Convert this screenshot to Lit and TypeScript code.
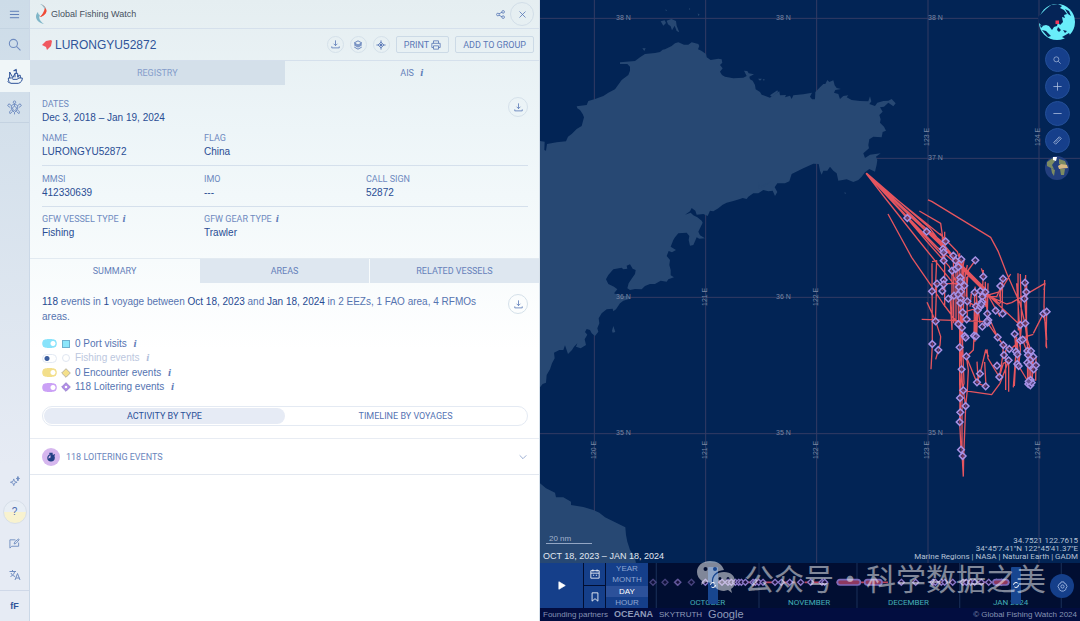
import { LitElement, html, svg, css } from "lit";
import { customElement, state } from "lit/decorators.js";
import { classMap } from "lit/directives/class-map.js";

const LAND_NORTH =
  "M0,423 L14,425 13,450 18,452 21,432 50,427 78,424 84,410 95,402 110,387 125,378 132,352 128,342 120,330 112,325 110,319 140,315 145,303 163,298 190,288 205,278 225,268 245,240 265,225 270,212 270,200 262,192 240,192 240,187 285,183 300,172 315,162 345,159 360,156 368,149 375,148 395,138 405,130 415,127 432,134 445,134 455,127 475,132 478,138 474,148 484,152 498,162 500,172 512,180 535,176 545,178 547,188 540,195 548,205 540,215 546,225 555,230 580,235 610,233 620,228 612,212 622,213 626,220 642,223 628,230 630,238 638,242 645,255 647,268 660,276 665,284 690,293 700,285 718,274 720,286 738,285 735,292 750,287 755,297 760,286 790,283 816,278 810,290 816,298 825,298 826,276 840,262 850,252 856,252 862,240 868,246 880,241 884,256 890,264 903,267 886,270 882,278 895,282 900,297 910,288 925,286 920,292 935,300 960,303 985,304 990,289 994,304 988,312 1005,318 1012,308 1030,303 1045,302 1055,297 1067,310 1060,319 1045,308 1032,320 1020,322 1028,335 1018,345 1022,358 1020,368 1032,380 1038,392 1028,396 1025,412 1000,410 988,418 985,435 987,445 970,460 975,474 990,464 1022,460 1008,470 1012,480 1010,494 1005,515 988,507 975,517 965,530 955,540 940,546 920,538 895,542 890,520 880,512 870,500 862,512 850,512 845,524 840,512 836,492 820,491 790,505 755,522 748,544 735,550 712,550 704,562 712,576 705,588 698,572 685,574 670,570 655,580 640,580 625,590 620,597 608,594 600,597 580,603 560,608 548,614 535,625 520,634 510,632 503,648 490,642 470,644 466,632 455,624 450,634 435,644 452,638 460,646 472,652 485,662 488,668 480,685 475,695 480,706 495,715 478,716 470,712 465,724 460,735 450,737 446,720 448,708 440,698 415,700 405,712 400,720 392,740 408,750 396,757 386,753 380,768 390,780 388,795 392,810 392,826 402,832 385,838 380,845 362,842 345,852 330,852 315,858 305,868 285,867 270,870 262,865 266,850 275,836 285,822 287,810 278,806 270,793 260,797 262,806 250,808 245,803 220,808 205,825 198,838 205,852 222,860 232,868 222,880 242,888 262,888 270,896 250,902 240,910 228,928 220,934 218,926 200,928 185,940 176,955 178,970 172,985 175,995 165,1008 155,1000 150,990 140,987 135,996 142,1004 134,1018 138,1035 122,1045 108,1040 112,1030 102,1040 96,1050 84,1062 75,1036 70,1050 58,1050 42,1058 44,1075 36,1090 30,1108 20,1125 18,1148 8,1152 0,1162 Z";
const LAND_SOUTH =
  "M0,1450 L18,1465 45,1478 48,1492 70,1492 93,1505 93,1515 130,1521 160,1530 178,1538 195,1552 256,1582 258,1605 262,1625 270,1650 284,1670 290,1700 0,1700 Z";
const ISLETS =
  "M362,64 l12,-3 4,8 -8,8 z M380,62 l14,-5 14,6 2,14 8,20 -8,-4 -6,-16 -8,14 -4,-12 -8,-6 z M307,145 l10,0 -4,8 z M690,286 l22,-15 2,5 -18,14 z M655,545 l4,16 34,-18 -26,20 -12,2 z M216,992 l4,-14 6,18 -8,2 z M376,28 l5,3 -3,3 z M447,24 l4,3 -3,3 z M473,40 l6,4 -4,4 z M654,236 l12,0 -6,6 z M668,238 l6,0 -2,5 z M913,577 l6,2 -4,3 z";

const TRACKS = [
  "M18,70 L100,140 180,205 250,262 292,305 300,330",
  "M18,70 L110,160 200,245 258,300 304,350 376,426 420,462",
  "M18,70 L142,200 230,290 300,352 390,440 480,525",
  "M18,70 L142,204 250,318",
  "M18,70 L120,180 210,285 268,350 295,410",
  "M18,70 L80,150 175,270 280,400",
  "M20,72 L150,195 240,270 290,330 380,420",
  "M22,74 L160,200 248,285",
  "M20,70 L130,165 210,235 252,290 M20,72 L125,172 215,252 262,310 M140,190 L250,290 320,365 376,420",
  "M84,192 L155,322 217,412 250,462 295,522",
  "M178,183 L242,220 248,262 249,300",
  "M204,150 L215,154 392,262 415,305 440,370 480,460 495,520 500,560",
  "M185,508 L280,511 380,515",
  "M201,457 L227,514 242,560 240,585 227,628",
  "M216,335 L230,332 226,420 M216,340 L217,585 213,658 M230,400 L226,520 M254,245 V470 M247,262 V335",
  "M231,401 L300,400 M313,325 L295,440 M322,345 L303,440 M346,331 L325,360 318,440 M304,328 L295,350",
  "M288,330 V520 M293,340 L296,530 M299,310 L301,560 M306,330 L304,560 M311,350 L303,500 M316,360 L308,520",
  "M276,365 V540 M281,430 V520 M270,440 L276,540 M320,380 L322,508 M334,430 L330,470",
  "M344,427 L342,560 M350,430 L347,560 M361,423 V480 M370,360 L367,440 M376,395 V470 M364,355 L372,380 M384,400 L382,491",
  "M355,440 L410,440 428,400 M428,386 L426,490 M424,408 L430,380 M421,410 V460 M390,440 L440,462 455,458 555,400 552,420",
  "M376,426 L382,491 413,562 430,585 448,597 M367,440 L420,425 452,372 M382,510 L367,530 M384,435 L420,500",
  "M474,370 L475,540 481,525 M481,372 L485,520 479,590 M497,375 L494,446 502,560 M500,400 L499,580 M470,400 L482,580",
  "M554,390 L552,470 560,595 M560,485 L558,590 M550,491 L558,530 560,570 M550,491 L520,550 M520,553 L488,563 450,600",
  "M295,522 L303,560 300,592 305,655 300,745 299,815 303,895 M299,540 V700 L301,790 M306,533 L312,700 306,720",
  "M308,540 L304,640 308,720 M306,720 V910 L310,980 M310,720 L317,770 311,920 310,978 M301,745 V815",
  "M342,560 L340,600 319,620 325,660 322,720 317,768 M319,620 L351,698 360,672 377,600 386,620 M351,635 L355,700 377,710 M374,636 L378,708 M381,598 L384,625 418,681 430,640 446,632",
  "M312,722 L395,734 420,700 446,632 V725 M413,562 L430,585 428,620 418,681 M437,600 V720",
  "M464,552 L468,605 460,712 M470,560 L466,650 463,708 M472,570 L475,650 M481,520 V600 L476,648 512,708 M488,569 L510,630",
  "M502,560 L503,700 M506,590 L508,700 M513,600 L512,705 M520,620 L516,700 M528,620 L527,692 M499,560 L512,600 521,658",
  "M251,390 L247,423 M257,274 L250,330 M240,250 L257,274 M280,317 L282,437 M430,386 L418,440 M345,410 L360,520",
  "M348,469 L345,575 M353,481 L350,560 M322,454 L348,469 M308,487 L368,470 M380,515 L413,562",
];

const EVENTS = [
  142,204,200,245,257,274,249,297,251,307,251,332,280,317,287,332,304,328,346,331,276,362,287,357,295,351,370,380,429,386,421,408,
  495,398,499,426,493,446,231,401,251,390,251,403,247,423,216,424,265,446,282,437,301,383,301,395,313,407,297,411,302,425,295,434,
  302,445,301,459,322,454,344,427,361,423,376,426,367,440,366,456,348,469,353,481,361,470,364,463,407,482,428,491,308,487,320,508,
  295,522,306,533,227,514,382,491,385,510,383,518,367,530,381,514,550,491,560,485,481,525,496,520,217,582,235,600,299,592,314,558,
  317,563,342,557,348,559,319,619,305,658,360,671,351,697,377,709,310,721,300,744,317,768,301,787,299,816,303,899,308,918,413,562,
  430,585,448,597,432,615,446,631,411,647,418,681,464,552,468,605,472,613,472,642,476,648,481,572,488,569,502,603,513,603,504,615,
  520,620,510,630,502,638,508,645,521,658,528,646,512,690,505,702,511,706,515,698,506,694,
];
const pairs = (list: number[]) => list.reduce((out: number[][], v, i) => (i % 2 ? out[out.length - 1].push(v) : out.push([v]), out), []);

const icon = (body: unknown, size = 12, box = 24) =>
  html`<svg class="icon" width=${size} height=${size} viewBox="0 0 ${box} ${box}" aria-hidden="true">${body}</svg>`;

const ICONS = {
  menu: svg`<path d="M2 5H22M2 12H22M2 19H22"/>`,
  search: svg`<circle cx="10" cy="10" r="7.5"/><path d="M15.5 15.5L23 23"/>`,
  ship: svg`<path d="M2 15h5l2 2h6l3-2h5c0 4-2 7-6 8H6c-3-1-4-4-4-8zM4 15V6l5 9M12 14V8h4v6M12 8l-3 6M14 8V2l-4 2h4M17 14V11h3v4M1 20l3 3"/>`,
  turtle: svg`<circle cx="12" cy="3.5" r="2"/><path d="M12 6l5 3v6l-5 5-5-5V9zM12 6v4l-3 2v3l3 2 3-2v-3l-3-2M7 9L3 6 1 9l4 3M17 9l4-3 2 3-4 3M7 16l-3 3 1 3 4-4M17 16l3 3-1 3-4-4M12 20v3"/>`,
  sparkle: svg`<path d="M9 7l2 6 6 2-6 2-2 6-2-6-6-2 6-2z"/><path d="M19 1l1.200 4L23 6l-2.800 1L19 12l-1.200-5L15 6l2.800-1z" fill="currentColor"/>`,
  feedback: svg`<path d="M14 4H2v18l4-4h15v-8"/><path d="M11 13l2-5 8-6 1 2-7 8z"/>`,
  language: svg`<path d="M1 5h13M7 2v3M3 15c5-2 8-6 8-10M4 8c1 3 5 6 8 7M12 22l5-13 5 13M14 18h7"/>`,
  share: svg`<circle cx="5" cy="12" r="3.500"/><circle cx="19" cy="5" r="3.500"/><circle cx="19" cy="19" r="3.500"/><path d="M8 10l8-4M8 14l8 4"/>`,
  close: svg`<path d="M4 4l16 16M20 4L4 20"/>`,
  download: svg`<path d="M12 1v14M7 10l5 5 5-5M2 17v4h20v-4"/>`,
  layers: svg`<path d="M12 2l9 5-9 5-9-5zM3 12l9 5 9-5M3 17l9 5 9-5M3 9.500l9 5 9-5"/>`,
  target: svg`<path d="M12 1v5M12 18v5M1 12h5M18 12h5M12 5l7 7-7 7-7-7z"/><circle cx="12" cy="12" r="2.500" fill="currentColor"/>`,
  print: svg`<path d="M6 8V2h12v6M6 18H2V8h20v10h-4M6 14h12v8H6z"/>`,
  chevron: svg`<path d="M2 7l10 10L22 7"/>`,
  plus: svg`<path d="M12 1v22M1 12h22"/>`,
  minus: svg`<path d="M1 12h22"/>`,
  ruler: svg`<path d="M2 17L17 2l5 5L7 22zM6 17l3-3M10 13l3-3M14 9l3-3"/>`,
  play: svg`<path d="M5 2l17 10L5 22z" fill="currentColor"/>`,
  calendar: svg`<path d="M2 4h20v18H2zM2 10h20M7 1v5M17 1v5M7 15h3M14 15h3"/>`,
  bookmark: svg`<path d="M5 2h14v20l-7-6-7 6z"/>`,
  gear: svg`<path d="M9 2h6l1 3 3 1 3 6-2.500 4-.5 3-5 3h-4l-5-3-.500-3L2 12l3-6 3-1z"/><circle cx="12" cy="12" r="3.500"/>`,
};

@customElement("app-root")
export class AppRoot extends LitElement {
  @state() private scale = "DAY";

  static styles = css`
    :host {
      --ink: #2f5499;
      --soft: #6e8ac0;
      --line: #d5e0ec;
      display: grid;
      grid-template-columns: 30px minmax(0, 510fr) minmax(0, 540fr);
      height: 100vh;
      min-height: 560px;
      overflow: hidden;
      font-family: "Liberation Sans", Arial, sans-serif;
      font-size: 10px;
      line-height: 14px;
      color: var(--ink);
    }
    * { box-sizing: border-box; }
    button { margin: 0; padding: 0; border: 0; background: none; color: inherit; font: inherit; cursor: pointer; }
    h1, h2, p, dl, dd, dt, ul { margin: 0; padding: 0; font-weight: inherit; font-size: inherit; list-style: none; }
    .icon { display: block; flex: none; fill: none; stroke: currentColor; stroke-width: 2; }
    .caps { font-family: Roboto, Arial, sans-serif; font-size: 9px; }

    .rail { display: flex; flex-direction: column; background: linear-gradient(#cddce8, #e6ebf4 75%); border-right: 1px solid #cbd8e7; }
    .rail button { display: grid; place-items: center; height: 31px; color: #6f8cc0; }
    .rail .menu { height: 29px; border-bottom: 1px solid #c4d4e2; color: #5577b3; }
    .rail .active { height: 32px; margin-right: -1px; background: #f0f6f8; color: var(--ink); }
    .rail .turtle { border-bottom: 1px solid #c4d2e1; }
    .rail .active .icon, .rail .turtle .icon { stroke-width: 1.5; }
    .spacer { flex: 1; }
    .rail .help { width: 24px; height: 24px; margin: 4px auto; border: 1px solid #d7dfe9; border-radius: 50%; background: linear-gradient(#e8eef5 50%, #f8f2cf 50%); color: #4a6aad; font-size: 10px; }
    .rail .user { border-top: 1px solid #cfd8e8; color: var(--ink); font-weight: bold; font-size: 9px; }

    .panel { background: linear-gradient(#e5eef1, #edf5f8 130px, #f7fbfc 260px, #ffffff 350px); border-right: 1px solid #d6e0ea; }
    .top { display: flex; align-items: center; height: 29px; padding: 0 5px; border-bottom: 1px solid var(--line); font-size: 9px; color: #465160; }
    .brand { display: flex; align-items: center; gap: 2px; flex: 1; }
    .top button { display: grid; place-items: center; width: 20px; color: #4f70b2; }
    .top .close { width: 24px; height: 24px; border: 1px solid #d2dee8; border-radius: 50%; }
    .title { display: flex; align-items: center; gap: 6px; height: 32px; padding: 0 5px 0 12px; border-bottom: 1px solid var(--line); }
    .title h1 { display: flex; align-items: center; gap: 3px; flex: 1; font-size: 12px; }
    .round { display: grid; place-items: center; width: 17px; height: 17px; border: 1px solid #d5e1ea; border-radius: 50%; color: #4f70b2; }
    .round.big { width: 20px; height: 20px; }
    .pill { display: flex; align-items: center; gap: 2px; height: 17px; padding: 0 7px; border: 1px solid #ccdae6; border-radius: 2px; color: #5b79b7; }
    .tabs { display: flex; height: 24px; }
    .tabs button { flex: 1; color: #6581ba; }
    .tabs button.off { background: #d4e0ea; }
    .tabs .faded { color: #849dcb; }
    .tabs.lower { height: 25px; gap: 1px; border-top: 1px solid #e2eaf1; }
    .tabs.lower button.off { background: #dee7f0; }
    .info { margin-left: 4px; font: italic bold 11px/10px "Liberation Serif", serif; color: #5f7cb8; }

    .facts { position: relative; padding: 12px 11px 18px 12px; }
    .facts .round { position: absolute; right: 11px; top: 12px; }
    .row { display: grid; grid-template-columns: repeat(3, 1fr); }
    .row + .row { padding-top: 6px; }
    .row.ruled { padding-bottom: 6px; border-bottom: 1px solid var(--line); }
    .row.ruled + .row { padding-top: 5px; }
    .row.ruled + .row.ruled { padding-top: 6px; }
    dt { color: var(--soft); }
    dd { color: #294d94; }

    .summary { padding: 11px 11px 12px 12px; }
    .lead { display: flex; align-items: flex-start; justify-content: space-between; gap: 24px; line-height: 15px; color: #5674b0; }
    .lead b { font-weight: normal; color: #264a92; }
    .lead .round { flex: none; }
    .legend { padding: 12px 0; color: #5574b2; }
    .legend label { display: flex; align-items: center; gap: 4px; height: 15px; }
    .legend li:nth-child(even) label { height: 14px; }
    .legend .dim { color: #bcc7de; }
    .legend .dim .info { color: #b0bddb; }
    .switch { appearance: none; width: 15px; height: 9px; margin: 0; border: 1px solid #e2e9f3; border-radius: 5px; background: radial-gradient(circle at 4px 50%, #3d5f9f 2px, #ffffff 3px); }
    .switch:checked { border-color: var(--tone); background: radial-gradient(circle at 10px 50%, #ffffff 2px, var(--tone) 3px); }
    .cyan { --tone: #88e3fb; }
    .gold { --tone: #f3df8b; }
    .violet { --tone: #cba1f6; }
    .segment { display: flex; height: 20px; padding: 1px; border: 1px solid #e4eaf3; border-radius: 10px; color: #5674b4; }
    .segment button { flex: 1; border-radius: 9px; }
    .segment .on { background: #e6ebf5; color: #2c5199; }
    .group { display: flex; align-items: center; gap: 6px; width: 100%; height: 37px; padding: 0 12px; border-top: 1px solid #e8ecf3; border-bottom: 1px solid #e3e8f0; color: #6a86bd; }
    .group .label { flex: 1; text-align: left; }
    .badge { display: grid; place-items: center; width: 18px; height: 18px; border-radius: 50%; background: #d6b7ee; color: #213f83; }

    .mapside { position: relative; display: flex; flex-direction: column; background: #022455; color: #c9d4e6; }
    .canvas { flex: 1; min-height: 0; width: 100%; display: block; }
    .canvas text { font: 7px "Liberation Sans", Arial, sans-serif; fill: #7887a3; }
    .tools { position: absolute; top: 3px; right: 4px; display: flex; flex-direction: column; align-items: center; gap: 2px; }
    .tools button { display: grid; place-items: center; width: 25px; height: 25px; border: 1px solid #234f98; border-radius: 50%; background: #163f8b; color: #b4c4e2; }
    .tools .globe { width: 38px; height: 38px; margin-bottom: 4px; border: 0; background: none; }
    .tools .base { border: 0; background: none; }
    .legend-left { position: absolute; left: 3px; bottom: 58px; line-height: 15px; }
    .legend-left .bar { display: block; width: 46px; margin: 0 0 4px 3px; padding-left: 3px; border-bottom: 1px solid #93a6c4; font-size: 8px; line-height: 9px; color: #a2b3cd; }
    .legend-left .range { font-size: 9px; line-height: 14px; color: #e1e8f2; }
    .legend-right { position: absolute; right: 2px; bottom: 60px; text-align: right; font-family: Roboto, Arial, sans-serif; font-size: 8px; line-height: 8px; color: #b6c2d6; }
    .timebar { display: flex; height: 45px; background: #010e32; }
    .timebar button { display: grid; place-items: center; background: #153f8a; color: #ffffff; }
    .timebar .play { width: 43px; }
    .stack { display: grid; grid-template-rows: 1fr 1fr; gap: 1px; width: 21px; margin: 0 1px; }
    .scales { display: grid; grid-template-rows: repeat(4, 1fr); width: 42px; }
    .timebar .scales button { font-size: 8px; line-height: 11px; color: #8ea6d2; }
    .timebar .scales .on { background: #2c519a; color: #ffffff; }
    .track { position: relative; flex: 1; min-width: 0; overflow: hidden; }
    .track svg.events { display: block; width: 100%; height: 45px; }
    .track text { font: 8px Roboto, Arial, sans-serif; fill: #43aeb8; }
    .timebar .gear { position: absolute; right: 6px; top: 11px; width: 24px; height: 24px; border-radius: 50%; color: #9fb6e0; }
    .foot { display: flex; align-items: center; gap: 6px; height: 13px; padding: 0 3px; background: #020d40; font-size: 8px; line-height: 13px; color: #8592b4; }
    .foot a { color: #8f9bba; text-decoration: none; }
    .foot .oceana { font-weight: bold; font-size: 9px; }
    .foot .google { font-size: 11px; }
    .foot .copy { margin-left: auto; }
    .mark { position: absolute; right: 34px; bottom: 22px; display: flex; align-items: center; font: 400 30px/44px "Noto Sans CJK SC", sans-serif; color: #ffffff; opacity: 0.5; pointer-events: none; white-space: nowrap; }
    .mark svg { margin-right: 8px; }
    .mark .dot { width: 32px; text-align: center; }
  `;

  private info() {
    return html`<span class="info">i</span>`;
  }

  private fact(label: string, value: string, info = false) {
    return html`<div><dt class="caps">${label}${info ? this.info() : ""}</dt><dd>${value}</dd></div>`;
  }

  private legendRow(tone: string, text: string, on: boolean, shape: unknown) {
    return html`<li><label class=${on ? "" : "dim"}>
      <input type="checkbox" class="switch ${tone}" .checked=${on} />
      <svg width="10" height="10" viewBox="0 0 10 10" aria-hidden="true">${shape}</svg>
      <span>${text} ${this.info()}</span></label></li>`;
  }

  private map() {
    const lon = [163, 497, 830, 1164, 1497];
    const lat = [55, 475, 892, 1301];
    const across: [number, number, string][] = [
      [76, 20, "38 N"], [236, 20, "38 N"], [388, 20, "38 N"], [388, 160, "37 N"],
      [76, 299, "36 N"], [236, 299, "36 N"], [76, 435, "35 N"], [236, 435, "35 N"], [388, 435, "35 N"],
    ];
    const up: [number, number, string][] = [
      [56, 459, "120 E"], [167, 459, "121 E"], [278, 459, "122 E"], [389, 459, "123 E"], [500, 459, "124 E"],
      [167, 306, "121 E"], [278, 306, "122 E"], [389, 146, "123 E"], [500, 146, "124 E"],
    ];
    return html`<svg class="canvas" viewBox="0 0 540 563" preserveAspectRatio="xMaxYMax slice" role="img" aria-label="Vessel track map">
      <g transform="scale(0.33333)">
        <g stroke="#343c64" stroke-width="3">
          ${lon.map((x) => svg`<path d="M${x},0V1700"/>`)}
          ${lat.map((y) => svg`<path d="M0,${y}H1620"/>`)}
        </g>
        <path d=${LAND_NORTH} fill="#274873"/><path d=${LAND_SOUTH} fill="#274873"/><path d=${ISLETS} fill="#274873"/>
      </g>
      ${across.map(([x, y, t]) => svg`<text x=${x} y=${y}>${t}</text>`)}
      ${up.map(([x, y, t]) => svg`<text transform="translate(${x} ${y}) rotate(-90)">${t}</text>`)}
      <g transform="scale(0.33333) translate(960 450)">
        <path d=${TRACKS.join(" ")} fill="none" stroke="#e5555f" stroke-width="4" stroke-linejoin="round"/>
        ${pairs(EVENTS).map(([x, y]) => svg`<path d="M${x},${y - 10}l10,10 -10,10 -10,-10z" fill="#3b2a5e" fill-opacity="0.600" stroke="#a892e6" stroke-width="4.500"/>`)}
      </g>
    </svg>`;
  }

  private timeline() {
    const dots = [15, 51, 88, 90, 130, 172, 196, 222, 240, 250, 262, 272, 280, 292, 315, 322, 332, 345, 381, 400, 425, 458, 488, 522, 530, 760, 803, 855, 862, 880, 890, 914, 945, 955, 968, 980, 1000, 1022, 1045, 1060];
    const capsules = [[568, 637], [650, 702], [1035, 1082]];
    return html`<svg class="events" viewBox="0 0 432 45" preserveAspectRatio="xMinYMid slice" role="img" aria-label="Events over time">
      <g transform="scale(0.33333)">
        <path d="M25,0V135M333,0V135M627,0V135M935,0V135M1240,0V135" stroke="#142850" stroke-width="4"/>
        <path d="M190,58H380M400,58H440M470,58H530M565,58H720M845,58H900M935,58H1085" stroke="#b8455c" stroke-width="5"/>
        ${dots.map((x) => svg`<path d="M${x},49l9,9 -9,9 -9,-9z" fill="#190f3b" stroke="#8b78c8" stroke-width="4" opacity=${x < 160 ? 0.5 : 1}/>`)}
        ${capsules.map(([a, b]) => svg`<rect x=${a} y="50" width=${b - a} height="16" rx="8" fill="#8d3860" stroke="#7d6cbc" stroke-width="5"/>`)}
      </g>
      <text x="42" y="42">OCTOBER</text><text x="140" y="42">NOVEMBER</text>
      <text x="240" y="42">DECEMBER</text><text x="345" y="42">JAN 2024</text>
      ${[60, 363].map((x) => svg`<rect x=${x} y="4" width="10" height="37" rx="1" fill="#184690"/><circle cx=${x + 5} cy="22" r="2.500" fill="none" stroke="#fff" stroke-dasharray="5.500 2.400"/>`)}
    </svg>`;
  }

  render() {
    return html`
      <nav class="rail" aria-label="Main">
        <button class="menu" aria-label="Menu">${icon(ICONS.menu, 11)}</button>
        <button aria-label="Search">${icon(ICONS.search, 13)}</button>
        <button class="active" aria-label="Vessels">${icon(ICONS.ship, 16)}</button>
        <button class="turtle" aria-label="Environment">${icon(ICONS.turtle, 15)}</button>
        <span class="spacer"></span>
        <button aria-label="What's new">${icon(ICONS.sparkle, 10)}</button>
        <button class="help" aria-label="Help">?</button>
        <button aria-label="Feedback">${icon(ICONS.feedback, 11)}</button>
        <button aria-label="Language">${icon(ICONS.language, 12)}</button>
        <button class="user">fF</button>
      </nav>

      <main class="panel">
        <header class="top">
          <span class="brand">
            <svg width="14" height="20" viewBox="0 0 14 20" aria-hidden="true">
              <path d="M6 0c6 3 7 8 3 11-1 1-3 2-5 2 3-1 5-3 6-6 0-3-1-5-4-7z" fill="#ef4a36"/>
              <path d="M10 4c3 3 1 7-5 9 2-2 4-5 5-9z" fill="#ef4a36"/>
              <path d="M5 0c2 0 5 2 6 5L9 4C8 2 7 1 5 0z" fill="#8cc1cf"/>
              <path d="M3 8c-4 4-2 10 6 12-4-3-6-6-4-9-1 0-2-1-2-3z" fill="#7fb6c8"/>
            </svg>Global Fishing Watch
          </span>
          <button aria-label="Share">${icon(ICONS.share, 9)}</button>
          <button class="close" aria-label="Close">${icon(ICONS.close, 9)}</button>
        </header>

        <section class="title">
          <h1><svg width="10" height="10" viewBox="0 0 10 10" aria-hidden="true"><path d="M4 1l5-1 1 1-1 5-4 4L4 7 0 5z" fill="#f0585f"/></svg>LURONGYU52872</h1>
          <button class="round" aria-label="Download">${icon(ICONS.download, 9)}</button>
          <button class="round" aria-label="Layers">${icon(ICONS.layers, 10)}</button>
          <button class="round" aria-label="Center on vessel">${icon(ICONS.target, 10)}</button>
          <button class="pill caps">PRINT ${icon(ICONS.print, 10)}</button>
          <button class="pill caps">ADD TO GROUP</button>
        </section>

        <div class="tabs"><button class="off faded caps">REGISTRY</button><button class="caps">AIS ${this.info()}</button></div>

        <dl class="facts">
          <button class="round big" aria-label="Download data">${icon(ICONS.download, 9)}</button>
          <div class="row">${this.fact("DATES", "Dec 3, 2018 – Jan 19, 2024")}</div>
          <div class="row ruled">${this.fact("NAME", "LURONGYU52872")}${this.fact("FLAG", "China")}</div>
          <div class="row ruled">${this.fact("MMSI", "412330639")}${this.fact("IMO", "---")}${this.fact("CALL SIGN", "52872")}</div>
          <div class="row">${this.fact("GFW VESSEL TYPE", "Fishing", true)}${this.fact("GFW GEAR TYPE", "Trawler", true)}</div>
        </dl>

        <div class="tabs lower"><button class="caps">SUMMARY</button><button class="off caps">AREAS</button><button class="off caps">RELATED VESSELS</button></div>

        <section class="summary">
          <div class="lead">
            <p><b>118</b> events in <b>1</b> voyage between <b>Oct 18, 2023</b> and <b>Jan 18, 2024</b> in 2 EEZs, 1 FAO area, 4 RFMOs areas.</p>
            <button class="round big" aria-label="Download events">${icon(ICONS.download, 9)}</button>
          </div>
          <ul class="legend">
            ${this.legendRow("cyan", "0 Port visits", true, svg`<rect x="1.500" y="1.500" width="7" height="7" fill="#8be6fb" stroke="#6db0cf"/>`)}
            ${this.legendRow("", "Fishing events", false, svg`<circle cx="5" cy="5" r="3.500" fill="#fff" stroke="#e0e6f1"/>`)}
            ${this.legendRow("gold", "0 Encounter events", true, svg`<path d="M5 .7L9.300 5 5 9.300.7 5z" fill="#f5e08a" stroke="#b9b3a0"/>`)}
            ${this.legendRow("violet", "118 Loitering events", true, svg`<path d="M5 .7L9.300 5 5 9.300.7 5z" fill="#b18be6" stroke="#9c86cf"/><circle cx="5" cy="5" r="1.300" fill="#fff"/>`)}
          </ul>
          <div class="segment caps"><button class="on">ACTIVITY BY TYPE</button><button>TIMELINE BY VOYAGES</button></div>
        </section>

        <button class="group caps">
          <span class="badge">${icon(svg`<circle cx="12" cy="14" r="7.500" stroke-width="3"/><path d="M12 14V7a7 7 0 0 1 0 14 7 7 0 0 1-6-4z" fill="currentColor"/><path d="M8 3h8M19 6l2 2" stroke-width="3"/>`, 10)}</span>
          <span class="label">118 LOITERING EVENTS</span>
          ${icon(ICONS.chevron, 8)}
        </button>
      </main>

      <section class="mapside">
        ${this.map()}
        <div class="timebar">
          <button class="play" aria-label="Play">${icon(ICONS.play, 9)}</button>
          <div class="stack">
            <button aria-label="Calendar">${icon(ICONS.calendar, 10)}</button>
            <button aria-label="Bookmark">${icon(ICONS.bookmark, 10)}</button>
          </div>
          <div class="scales">
            ${["YEAR", "MONTH", "DAY", "HOUR"].map((s) => html`<button class=${classMap({ on: s === this.scale })} @click=${() => (this.scale = s)}>${s}</button>`)}
          </div>
          <div class="track">${this.timeline()}<button class="gear" aria-label="Settings">${icon(ICONS.gear, 11)}</button></div>
        </div>
        <footer class="foot">
          <span>Founding partners</span>
          <a class="oceana" href="#oceana">OCEANA</a><a href="#skytruth">SKYTRUTH</a><a class="google" href="#google">Google</a>
          <span class="copy">© Global Fishing Watch 2024</span>
        </footer>

        <div class="legend-left"><span class="bar">20 nm</span><span class="range">OCT 18, 2023 – JAN 18, 2024</span></div>
        <div class="legend-right">34.7521 122.7615<br />34°45′7.41″N 122°45′41.37″E<br />Marine Regions | NASA | Natural Earth | GADM</div>

        <div class="tools">
          <button class="globe" aria-label="World overview"><svg width="38" height="38" viewBox="0 0 38 38" aria-hidden="true">
            <circle cx="19" cy="19" r="18" fill="#69edfa"/>
            <path d="M8 6l5-4 7-1 4 2-2 2 4 2 3 4-3 1 1 3-3-1 1 5-3 3-2-3-1 4-3 1-2 3-3-4-3-1-4 1-3-3-1-6z" fill="#052457"/>
            <path d="M27 6l4 2 2 5-3-2zM4 27l4 1 5 5-3 1zM20 24l3 3-2 2-2-2zM25 27l4 1-2 2zM24 34l7-4 1 2-4 4zM2 22l3 1-2 2z" fill="#052457"/>
            <rect x="17.500" y="17.500" width="3.500" height="3.500" fill="#f0395c"/></svg></button>
          <button aria-label="Search map">${icon(ICONS.search, 8)}</button>
          <button aria-label="Zoom in">${icon(ICONS.plus, 9)}</button>
          <button aria-label="Zoom out">${icon(ICONS.minus, 9)}</button>
          <button aria-label="Measure">${icon(ICONS.ruler, 9)}</button>
          <button class="base" aria-label="Basemap"><svg width="24" height="24" viewBox="0 0 24 24" aria-hidden="true">
            <circle cx="12" cy="12" r="12" fill="#233f7e"/>
            <path d="M2 6l6-4 2 3-3 4 2 4-3-1-4-2zM6 12l4 2-1 6-2-3zM15 13l5 0-1 6-3 0zM14 3l6 2 2 5-3-1-5-1z" fill="#7c8b62"/>
            <path d="M13 10l3-2 6 1 1 3-9 1z" fill="#d6b983"/><path d="M8 1h4l-1 4-3-1z" fill="#fff"/></svg></button>
        </div>

        <div class="mark" lang="zh">
          <svg width="40" height="34" viewBox="0 0 40 34" aria-hidden="true">
            <path fill-rule="evenodd" fill="#fff" d="M14 1C6 1 1 6 1 12c0 4 2 7 5 9l-1 4 5-3 6 1C15 15 20 11 28 10 26 4 21 1 14 1zM9.500 7a2 2 0 1 1 0 4 2 2 0 0 1 0-4zM19 7a2 2 0 1 1 0 4 2 2 0 0 1 0-4zM28 12c-7 0-11 4-11 9.500S22 31 28 31l4-1 4 3-1-4c3-2 4-4 4-7.500C39 16 35 12 28 12zM24 17a1.500 1.500 0 1 1 0 3 1.500 1.500 0 0 1 0-3zM32 17a1.500 1.500 0 1 1 0 3 1.500 1.500 0 0 1 0-3z"/>
          </svg><span>公众号</span><span class="dot">·</span><span>科学数据之美</span>
        </div>
      </section>`;
  }
}
